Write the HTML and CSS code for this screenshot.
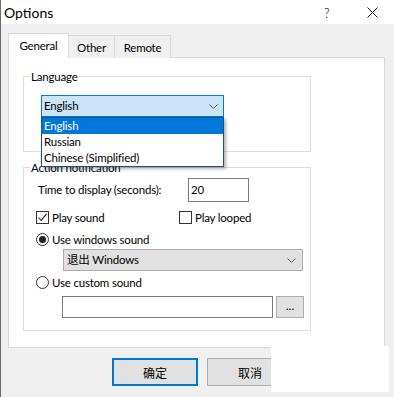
FILE: index.html
```html
<!DOCTYPE html>
<html lang="en">
<head>
    <meta charset="UTF-8">
    <title>Options</title>
    <link rel="stylesheet" href="styles.css">
</head>
<body>
    <div class="window">
        <div class="titlebar">
            <span class="title">Options</span>
            <span class="help">?</span>
            <svg class="close" width="11" height="11" viewBox="0 0 11 11">
                <path d="M0.5 0.5 L10.5 10.5 M10.5 0.5 L0.5 10.5" stroke="#1a1a1a" stroke-width="1" fill="none"/>
            </svg>
        </div>

        <div class="content">
            <div class="tabs">
                <div class="tab tab-general active">General</div>
                <div class="tab tab-other">Other</div>
                <div class="tab tab-remote">Remote</div>
            </div>

            <div class="panel">
                <div class="group group-lang">
                    <div class="group-title">Language</div>
                    <div class="combo-wrap">
                        <div class="combo focused">
                            <span>English</span>
                            <svg width="9" height="5" viewBox="0 0 9 5">
                                <path d="M0.5 0.5 L4.5 4.5 L8.5 0.5" stroke="#555" fill="none"/>
                            </svg>
                        </div>
                        <ul class="dropdown">
                            <li class="selected">English</li>
                            <li>Russian</li>
                            <li>Chinese (Simplified)</li>
                        </ul>
                    </div>
                </div>

                <div class="group group-action">
                    <div class="group-title">Action notification</div>

                    <div class="row-time">
                        <span class="time-label">Time to display (seconds):</span>
                        <div class="textbox time-input">20</div>
                    </div>

                    <div class="row-checks">
                        <label class="check check-sound">
                            <span class="box">
                                <svg width="11" height="11" viewBox="0 0 11 11">
                                    <path d="M1.5 5.5 L4.2 8.5 L9.5 1.8" stroke="#222" stroke-width="1.1" fill="none"/>
                                </svg>
                            </span>
                            Play sound
                        </label>
                        <label class="check check-looped">
                            <span class="box"></span>
                            Play looped
                        </label>
                    </div>

                    <label class="radio radio-windows">
                        <span class="circle on"></span>
                        Use windows sound
                    </label>

                    <div class="select">
                        <span>退出 Windows</span>
                        <svg width="9" height="5" viewBox="0 0 9 5">
                            <path d="M0.5 0.5 L4.5 4.5 L8.5 0.5" stroke="#555" fill="none"/>
                        </svg>
                    </div>

                    <label class="radio radio-custom">
                        <span class="circle"></span>
                        Use custom sound
                    </label>

                    <div class="row-file">
                        <div class="textbox file-input"></div>
                        <button class="browse">...</button>
                    </div>
                </div>
            </div>

            <div class="buttons">
                <button class="btn default">确定</button>
                <button class="btn">取消</button>
                <button class="btn">应用</button>
            </div>
        </div>

        <div class="blank-patch"></div>
    </div>
</body>
</html>
```

FILE: styles.css
```css
* {
    box-sizing: border-box;
}

body {
    margin: 0;
    padding: 0;
    background-color: #f0f0f0;
}

.window {
    position: relative;
    width: 394px;
    height: 397px;
    border-left: 1px solid #6a6a6a;
    background-color: #f0f0f0;
    font-family: Lato, "Noto Sans CJK SC", sans-serif;
    font-size: 11.5px;
    letter-spacing: -0.2px;
    line-height: 14px;
    color: #000;
    overflow: hidden;
}

.titlebar {
    display: flex;
    align-items: center;
    height: 24px;
    background-color: #fff;
}

.title {
    padding-left: 3px;
    font-size: 14px;
    letter-spacing: 0;
    line-height: 18px;
    margin-top: 1px;
}

.help {
    margin-left: auto;
    font-size: 13px;
    font-weight: 300;
    width: 43px;
    margin-top: 1px;
}

.close {
    margin-right: 16px;
    margin-top: 1px;
}

.content {
    padding: 10px 0 0 7px;
}

.tabs {
    display: flex;
    align-items: flex-end;
    height: 24px;
    margin-bottom: -1px;
}

.tab {
    height: 23px;
    border: 1px solid #d9d9d9;
    border-bottom: none;
    text-align: center;
    padding-top: 5px;
    background-color: #f0f0f0;
}

.tab.active {
    position: relative;
    height: 25px;
    padding-top: 5px;
    background-color: #fff;
    z-index: 1;
}

.tab-general {
    width: 61px;
}

.tab-other {
    width: 47px;
    margin-left: -1px;
}

.tab-remote {
    width: 57px;
    margin-left: -1px;
}

.panel {
    width: 377px;
    height: 291px;
    border: 1px solid #d9d9d9;
    background-color: #fff;
    padding: 18px 0 0 14px;
}

.group {
    width: 288px;
    border: 1px solid #dcdcdc;
}

.group-title {
    width: max-content;
    margin: -7px 0 0 6px;
    padding: 0 1px;
    background-color: #fff;
}

.group-lang {
    height: 76px;
}

.combo-wrap {
    position: relative;
    margin: 11px 0 0 17px;
    width: 183px;
}

.combo {
    display: flex;
    align-items: center;
    justify-content: space-between;
    height: 22px;
    padding: 0 5px 0 2px;
    border: 1px solid #0078d7;
    background-color: #cce4f7;
}

.dropdown {
    position: absolute;
    top: 22px;
    left: 0;
    width: 183px;
    margin: 0;
    padding: 0;
    list-style: none;
    border: 1px solid #1f4f86;
    background-color: #fff;
    box-shadow: 2px 2px 3px rgba(0, 0, 0, 0.3);
    z-index: 2;
}

.dropdown li {
    height: 16px;
    line-height: 16px;
    padding-left: 2px;
}

.dropdown li.selected {
    background-color: #0078d7;
    color: #fff;
}

.group-action {
    height: 164px;
    margin-top: 15px;
}

.row-time {
    display: flex;
    align-items: center;
    margin: 3px 0 0 14px;
}

.time-label {
    width: 150px;
}

.textbox {
    border: 1px solid #7a7a7a;
    background-color: #fff;
}

.time-input {
    width: 61px;
    height: 24px;
    line-height: 22px;
    padding-left: 2px;
}

.row-checks {
    display: flex;
    margin: 9px 0 0 12px;
}

.check,
.radio {
    display: flex;
    align-items: center;
    height: 13px;
}

.check-sound {
    width: 143px;
}

.box {
    display: flex;
    align-items: center;
    justify-content: center;
    width: 13px;
    height: 13px;
    border: 1px solid #333;
    background-color: #fff;
    margin-right: 3px;
}

.radio {
    margin-left: 12px;
}

.radio-windows {
    margin-top: 9px;
}

.radio-custom {
    margin-top: 5px;
}

.circle {
    display: flex;
    align-items: center;
    justify-content: center;
    width: 13px;
    height: 13px;
    border: 1px solid #333;
    border-radius: 50%;
    background-color: #fff;
    margin-right: 3px;
}

.circle.on::after {
    content: "";
    width: 7px;
    height: 7px;
    border-radius: 50%;
    background-color: #222;
}

.select {
    display: flex;
    align-items: center;
    justify-content: space-between;
    width: 240px;
    height: 22px;
    margin: 3px 0 0 39px;
    padding: 0 6px 0 3px;
    border: 1px solid #adadad;
    background-color: #e1e1e1;
}

.row-file {
    display: flex;
    margin: 7px 0 0 38px;
}

.file-input {
    width: 211px;
    height: 22px;
}

.browse {
    width: 28px;
    height: 22px;
    margin-left: 3px;
    padding: 0 0 4px;
    border: 1px solid #adadad;
    background-color: #e1e1e1;
    font-family: Lato, sans-serif;
    font-size: 12px;
    color: #000;
}

.buttons {
    display: flex;
    justify-content: flex-end;
    gap: 9px;
    margin-top: 10px;
    padding-right: 6px;
}

.btn {
    width: 86px;
    height: 28px;
    border: 1px solid #adadad;
    background-color: #e1e1e1;
    font-family: "Noto Sans CJK SC", sans-serif;
    font-size: 12px;
    letter-spacing: 0;
    color: #000;
    padding: 0;
}

.btn.default {
    border: 2px solid #0078d7;
}

.blank-patch {
    position: absolute;
    left: 270px;
    top: 346px;
    width: 118px;
    height: 46px;
    background-color: #fff;
}
```
